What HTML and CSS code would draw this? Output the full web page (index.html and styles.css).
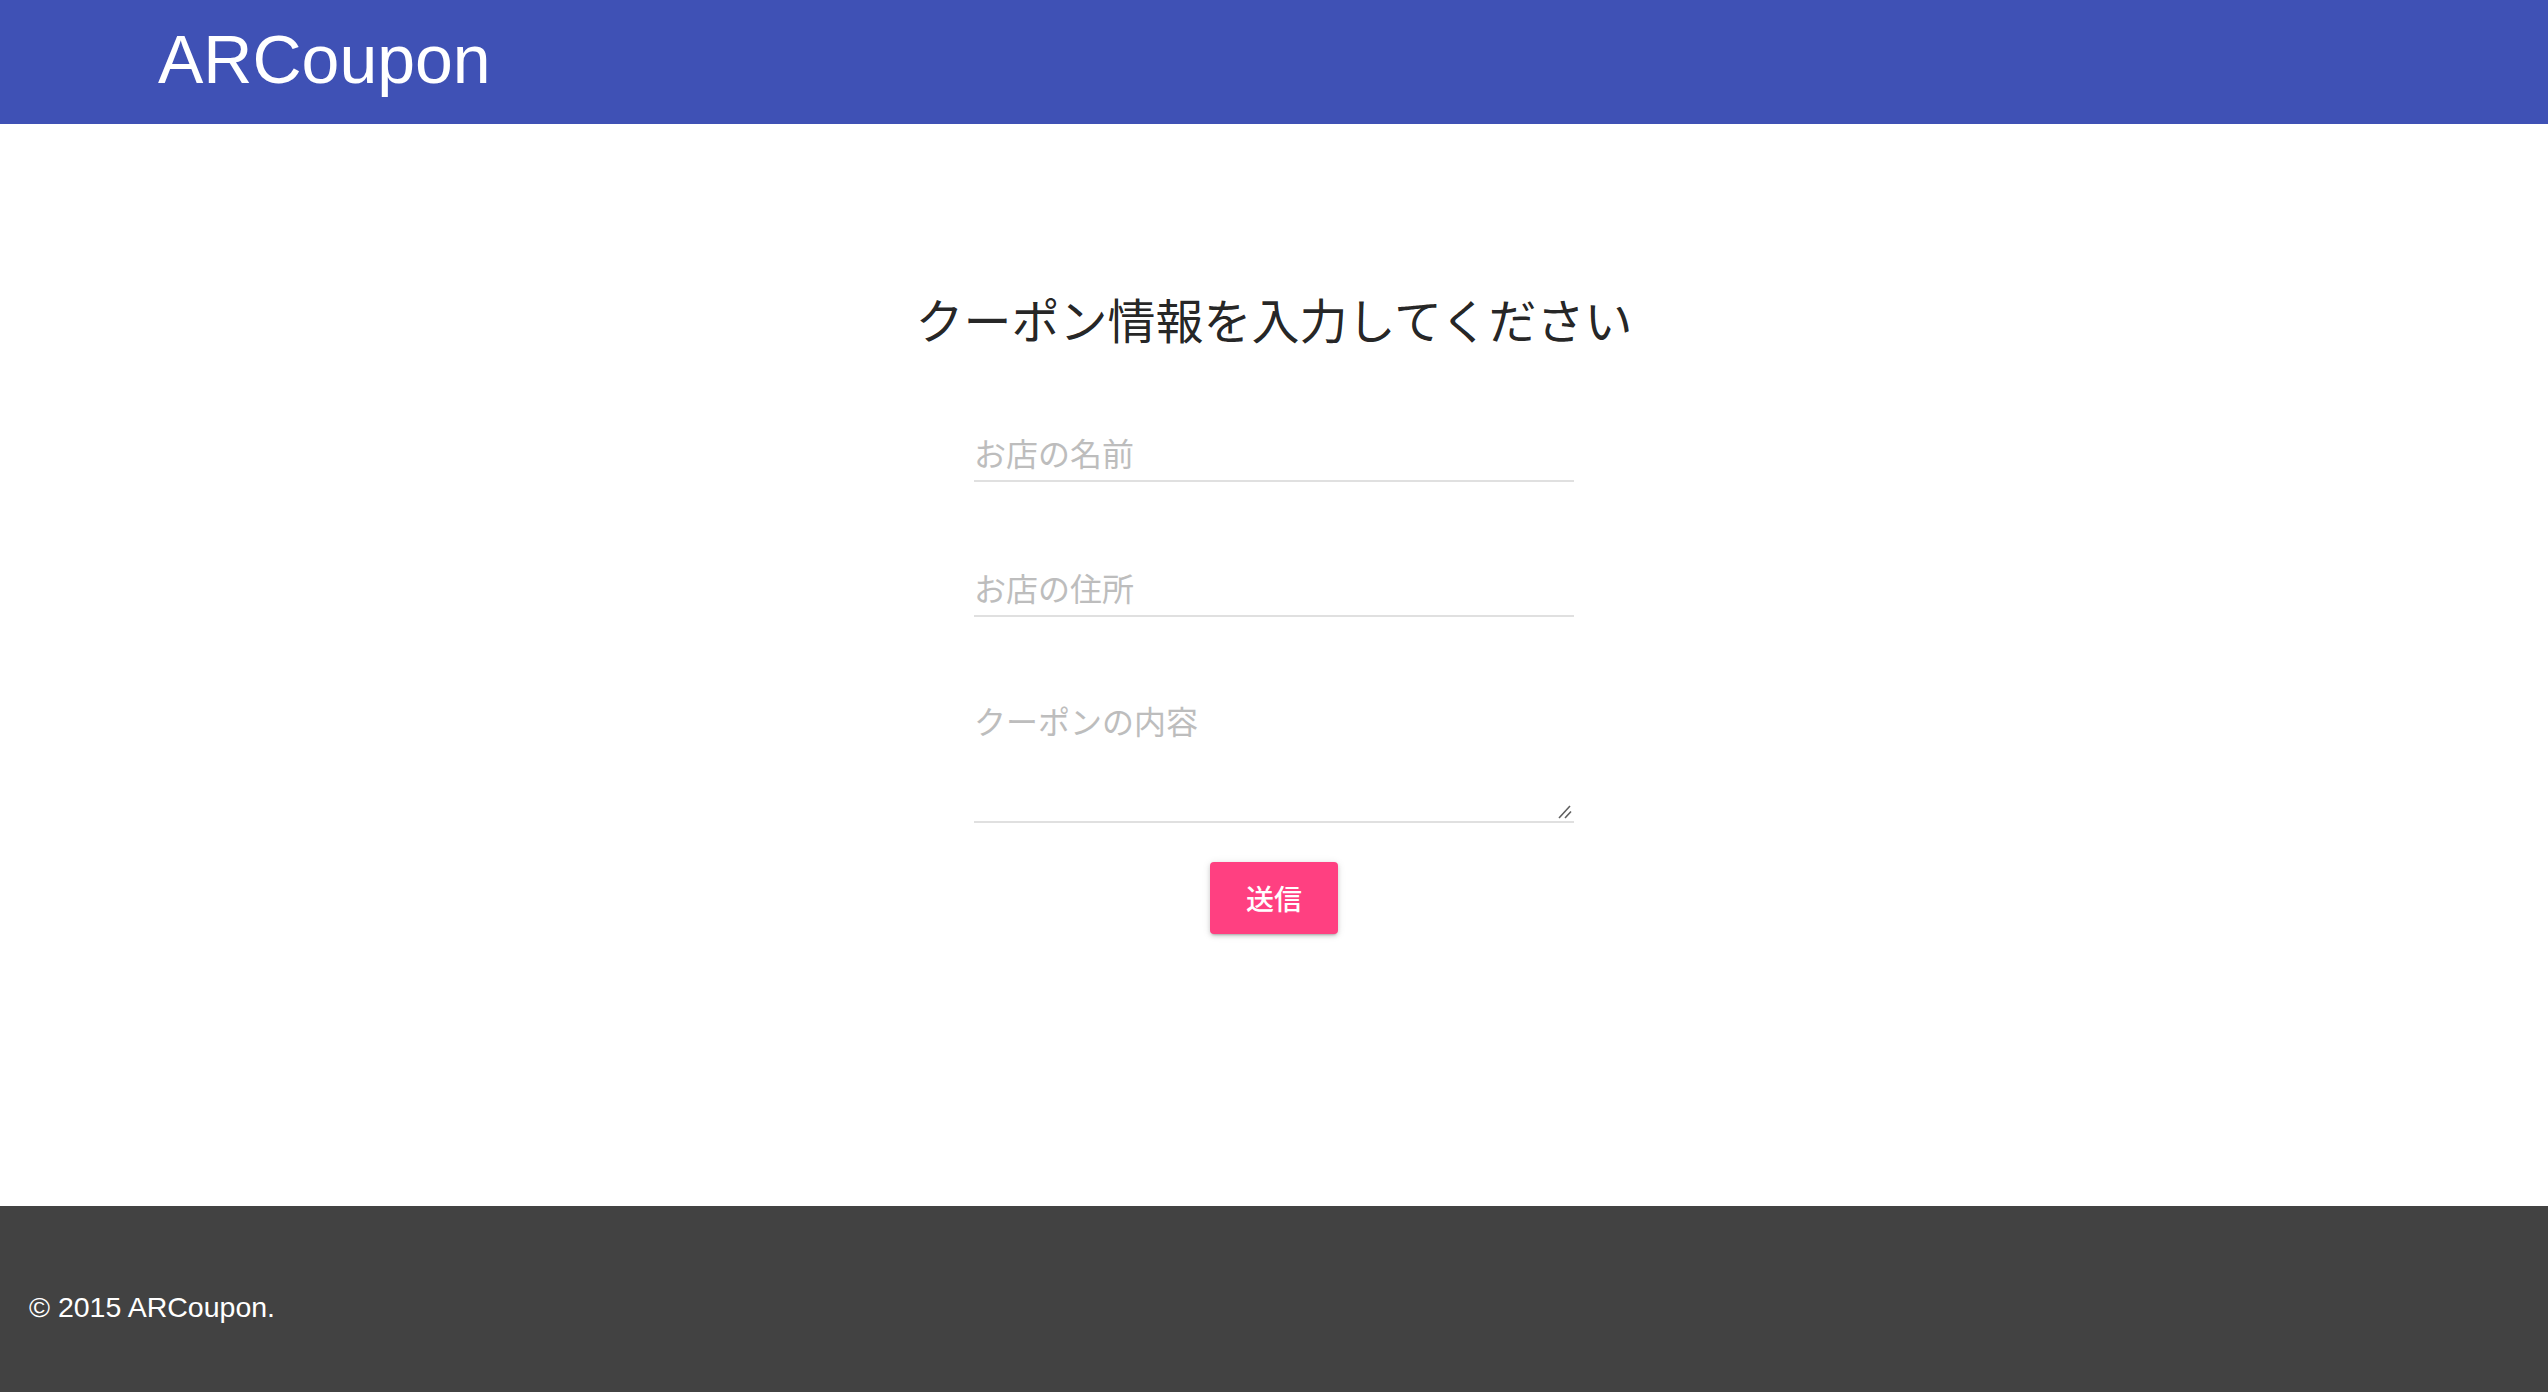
FILE: index.html
```html
<!DOCTYPE html>
<html lang="ja">
<head>
<meta charset="utf-8">
<title>ARCoupon</title>
<link rel="stylesheet" href="styles.css">
</head>
<body>
<header class="nav">
  <a class="brand" href="#">ARCoupon</a>
</header>
<main class="main">
  <h1 class="title">クーポン情報を入力してください</h1>
  <form class="form">
    <div class="field field-first"><input class="input" type="text" placeholder="お店の名前"></div>
    <div class="field"><input class="input" type="text" placeholder="お店の住所"></div>
    <div class="field field-area">
      <textarea class="textarea" placeholder="クーポンの内容"></textarea>
      <svg class="resizer" width="14" height="14" viewBox="0 0 14 14" aria-hidden="true">
        <line x1="1" y1="13" x2="12" y2="1" stroke="#5f5f5f" stroke-width="1.6"/>
        <line x1="7" y1="13" x2="13" y2="6.5" stroke="#5f5f5f" stroke-width="1.6"/>
      </svg>
    </div>
    <div class="actions"><button class="btn" type="button">送信</button></div>
  </form>
</main>
<footer class="footer">
  <div class="copyright">© 2015 ARCoupon.</div>
</footer>
</body>
</html>
```

FILE: styles.css
```css
* { box-sizing: border-box; }
html, body { margin: 0; padding: 0; }
body {
  min-height: 100vh;
  display: flex;
  flex-direction: column;
  font-family: "Noto Sans CJK JP", "Noto Sans", sans-serif;
  background: #ffffff;
}
.nav {
  height: 124px;
  background: #3f51b5;
  padding-left: 158px;
  display: flex;
  align-items: flex-start;
}
.brand {
  font-family: "Liberation Sans", Arial, sans-serif;
  font-size: 68px;
  line-height: 118px;
  color: #ffffff;
  text-decoration: none;
}
.main {
  flex: 1;
  display: flex;
  flex-direction: column;
  align-items: center;
  padding-top: 166px;
}
.title {
  margin: 0;
  font-size: 48px;
  line-height: 56px;
  font-weight: 400;
  color: rgba(0, 0, 0, 0.87);
}
.form {
  width: 600px;
  display: flex;
  flex-direction: column;
}
.field { margin-top: 77px; }
.field-first { margin-top: 78px; }
.field-area { margin-top: 80px; position: relative; }
.input, .textarea {
  display: block;
  width: 100%;
  margin: 0;
  border: none;
  border-bottom: 2px solid #e0e0e0;
  outline: none;
  background: transparent;
  font-family: "Noto Sans CJK JP", "Noto Sans", sans-serif;
  font-size: 32px;
  color: rgba(0, 0, 0, 0.87);
  padding: 0;
  border-radius: 0;
}
.input { height: 58px; }
.textarea {
  height: 126px;
  line-height: 46px;
  padding-top: 0;
  resize: none;
}
.input::placeholder, .textarea::placeholder { color: #bdbdbd; }
.resizer {
  position: absolute;
  right: 2px;
  bottom: 4px;
}
.actions {
  display: flex;
  justify-content: center;
  margin-top: 39px;
}
.btn {
  width: 128px;
  height: 72px;
  border: none;
  border-radius: 4px;
  background: #ff4081;
  color: #ffffff;
  font-family: "Noto Sans CJK JP", "Noto Sans", sans-serif;
  font-size: 28px;
  font-weight: 500;
  padding: 0;
  box-shadow: 0 2px 4px 0 rgba(0,0,0,0.14), 0 1px 8px 0 rgba(0,0,0,0.10), 0 3px 2px -2px rgba(0,0,0,0.18);
}
.footer {
  height: 186px;
  background: #424242;
  padding: 85px 29px 0;
}
.copyright {
  font-family: "Liberation Sans", Arial, sans-serif;
  font-size: 28.5px;
  line-height: 32px;
  color: #ffffff;
}
```
